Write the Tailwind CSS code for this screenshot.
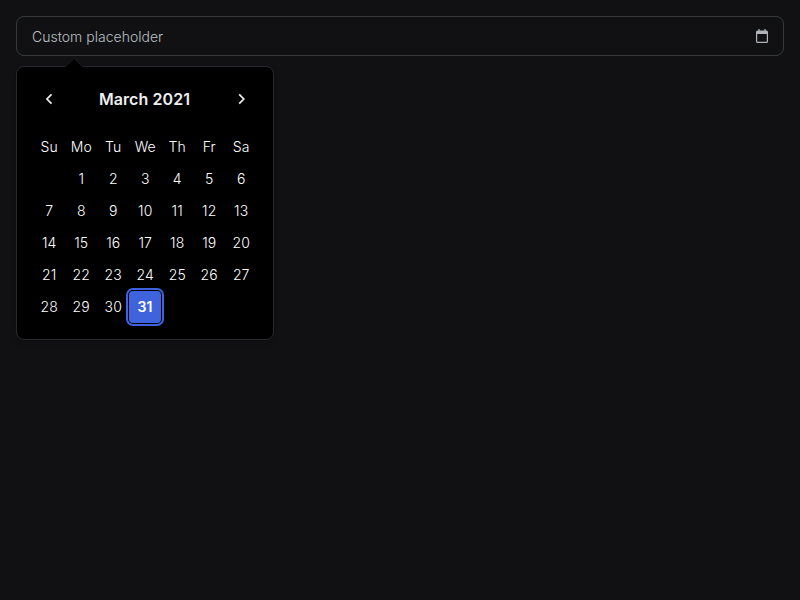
<!DOCTYPE html>
<html lang="en">
<head>
<meta charset="utf-8">
<title>Date picker</title>
<script src="https://cdn.jsdelivr.net/npm/@tailwindcss/browser@4"></script>
</head>
<body class="min-h-screen bg-[#111113] p-4 font-['Inter',sans-serif] text-[#edeef0]">
<div class="relative">
  <div class="flex h-10 items-center justify-between rounded-lg border border-[#363a3f] px-[15px]">
    <span class="pt-0.5 text-sm font-[360] tracking-[0.001em] text-[#bcc0c6]">Custom placeholder</span>
    <svg class="-mr-px h-4 w-[14px] text-[#b0b4ba]" viewBox="0 0 14 16"><path d="M2.5 2.5H11.5Q13 2.5 13 4V13.5Q13 15 11.5 15H2.5Q1 15 1 13.5V4Q1 2.5 2.5 2.5ZM2.2 6V13.7H11.8V6Z" fill="currentColor" fill-rule="evenodd"/><path d="M4 1V4M10 1V4" stroke="currentColor" stroke-width="1.2"/></svg>
  </div>
  <div class="absolute left-0 top-[50px] w-[258px] rounded-lg border border-[#272a2d] bg-black px-4 pb-4 pt-4 shadow-md">
    <svg class="absolute -top-[9px] left-12 h-[9px] w-[18px]" viewBox="0 0 18 9"><path d="M0 9L9 0.5L18 9Z" fill="#000"/><path d="M0.5 8.5L8.5 1Q9 0.6 9.5 1L17.5 8.5" fill="none" stroke="#212225" stroke-width=".7"/></svg>
    <div class="flex h-8 items-center justify-between">
      <button class="grid size-8 place-items-center"><svg class="size-4" viewBox="0 0 16 16" fill="none" stroke="currentColor" stroke-width="1.7"><path d="M10.5 3.3L5.9 8L10.5 12.7"/></svg></button>
      <span class="-ml-px text-base font-semibold tracking-[0.005em]">March 2021</span>
      <button class="grid size-8 place-items-center"><svg class="size-4" viewBox="0 0 16 16" fill="none" stroke="currentColor" stroke-width="1.7"><path d="M6.2 3.3L10.8 8L6.2 12.7"/></svg></button>
    </div>
    <div id="days" class="mt-4 grid grid-cols-[repeat(7,32px)] auto-rows-[32px] text-center text-sm leading-8"></div>
  </div>
</div>
<script>
const grid = document.getElementById('days');
const cells = ['Su','Mo','Tu','We','Th','Fr','Sa',''];
for (let d = 1; d <= 31; d++) cells.push(d);
for (const c of cells) {
  const el = document.createElement('div');
  el.textContent = c;
  if (c === 31) el.className = 'rounded-sm bg-[#3e63dd] font-semibold text-white ring-2 ring-[#3e63dd] ring-offset-1 ring-offset-black';
  else el.className = 'pl-[0.5px] font-[360] tracking-[0.01em] text-white';
  grid.append(el);
}
</script>
</body>
</html>
